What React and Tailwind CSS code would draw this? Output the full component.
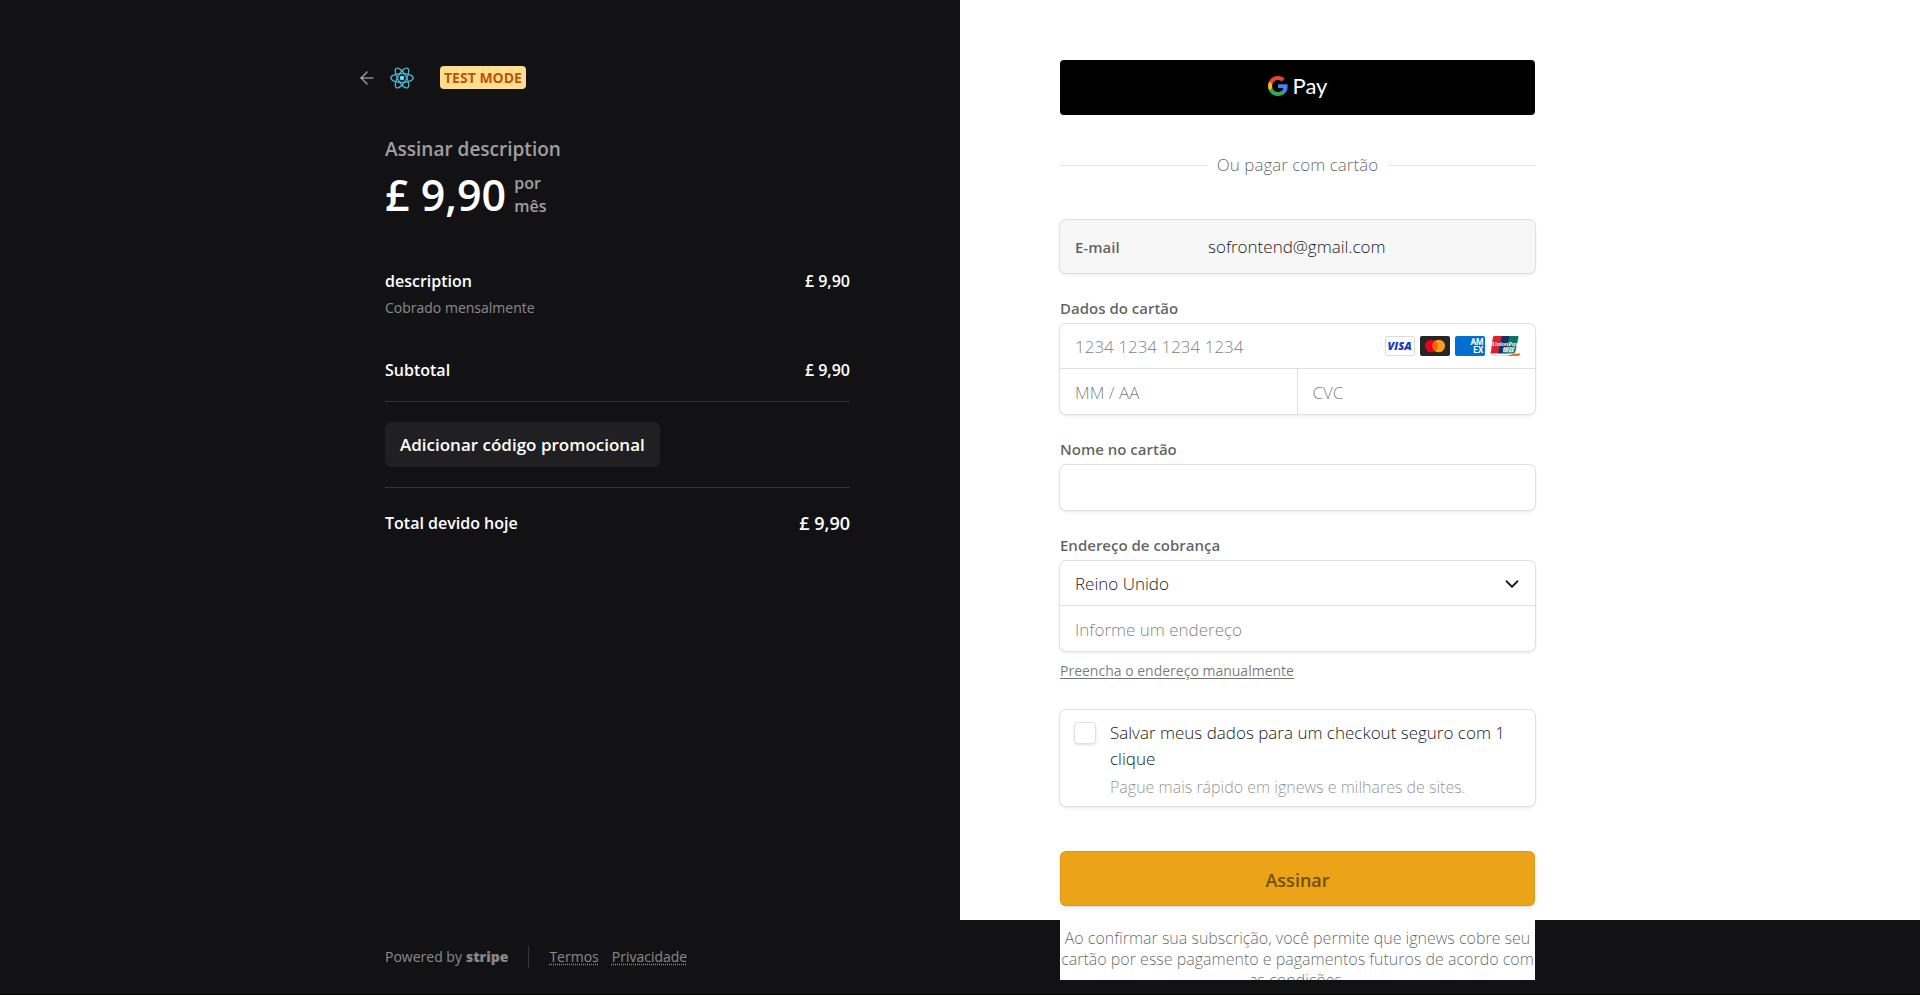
import React from "react";
import { ArrowLeft, ChevronDown } from "lucide-react";

const fieldBox =
  "rounded-md bg-white shadow-[0_0_0_1px_#e0e0e0,0_2px_4px_rgba(0,0,0,0.07),0_1px_2px_rgba(0,0,0,0.05)]";
const labelText = "text-[15px] leading-5 font-semibold text-[#1a1a1a]/70";
const inputText =
  "w-full bg-transparent px-[15px] text-[17px] font-light text-[#1a1a1a] placeholder:text-[#1a1a1a]/60 outline-none";

function ReactLogo() {
  return (
    <svg viewBox="0 0 24 24" className="size-6" fill="none" stroke="#4db3cd" strokeWidth="1.3" aria-hidden="true">
      <circle cx="12" cy="12" r="2.3" fill="#61dafb" stroke="none" />
      <ellipse cx="12" cy="12" rx="11.2" ry="4.3" />
      <ellipse cx="12" cy="12" rx="11.2" ry="4.3" transform="rotate(60 12 12)" />
      <ellipse cx="12" cy="12" rx="11.2" ry="4.3" transform="rotate(120 12 12)" />
    </svg>
  );
}

function GoogleMark() {
  return (
    <svg viewBox="1 1 22 22" className="size-5" aria-hidden="true">
      <path fill="#4285f4" d="M22.56 12.25c0-.78-.07-1.53-.2-2.25H12v4.26h5.92c-.26 1.37-1.04 2.53-2.21 3.31v2.77h3.57c2.08-1.92 3.28-4.74 3.28-8.09z" />
      <path fill="#34a853" d="M12 23c2.97 0 5.46-.98 7.28-2.66l-3.57-2.77c-.98.66-2.23 1.06-3.71 1.06-2.86 0-5.29-1.93-6.16-4.53H2.18v2.84C3.99 20.53 7.7 23 12 23z" />
      <path fill="#fbbc05" d="M5.84 14.09c-.22-.66-.35-1.36-.35-2.09s.13-1.43.35-2.09V7.07H2.18C1.43 8.55 1 10.22 1 12s.43 3.45 1.18 4.93l2.85-2.22.81-.62z" />
      <path fill="#ea4335" d="M12 5.38c1.62 0 3.06.56 4.21 1.64l3.15-3.15C17.45 2.09 14.97 1 12 1 7.7 1 3.99 3.47 2.18 7.07l3.66 2.84c.87-2.6 3.3-4.53 6.16-4.53z" />
    </svg>
  );
}

function VisaIcon() {
  return (
    <svg viewBox="0 0 30 20" className="h-5 w-[30px]" role="img" aria-label="Visa">
      <rect x="0.5" y="0.5" width="29" height="19" rx="1.5" fill="#fff" stroke="#dcdcdc" />
      <text x="14.6" y="14" textAnchor="middle" fontFamily="Open Sans, sans-serif" fontWeight="800" fontStyle="italic" fontSize="11" fill="#1434cb">
        VISA
      </text>
    </svg>
  );
}

function MastercardIcon() {
  return (
    <svg viewBox="0 0 30 20" className="h-5 w-[30px]" role="img" aria-label="Mastercard">
      <rect width="30" height="20" rx="2" fill="#252525" />
      <circle cx="11.3" cy="10" r="6.3" fill="#eb001b" />
      <circle cx="18.7" cy="10" r="6.3" fill="#f79e1b" />
      <path d="M15 4.9a6.3 6.3 0 0 1 0 10.2a6.3 6.3 0 0 1 0-10.2z" fill="#ff5f00" />
    </svg>
  );
}

function AmexIcon() {
  return (
    <svg viewBox="0 0 30 20" className="h-5 w-[30px]" role="img" aria-label="American Express">
      <rect width="30" height="20" rx="2" fill="#016fd0" />
      <text fill="#fff" fontFamily="Roboto, sans-serif" fontWeight="700" fontSize="8.5">
        <tspan x="15.4" y="9">AM</tspan>
        <tspan x="18.2" y="16.500">EX</tspan>
      </text>
    </svg>
  );
}

function UnionPayIcon() {
  return (
    <svg viewBox="0 0 30 20" className="h-5 w-[30px]" role="img" aria-label="UnionPay">
      <path d="M2 .5h24v19H2A1.5 1.5 0 0 1 .5 18V2A1.5 1.5 0 0 1 2 .5z" fill="#fff" />
      <path d="M.5 16v2A1.5 1.5 0 0 0 2 19.500h18" fill="none" stroke="#dcdcdc" />
      <path d="M4.400 0H12L8.200 17.500H.7L2.900 1.300Q3.200 0 4.400 0z" fill="#d9222a" />
      <path d="M11.700 0H20l-3.700 17.500H7.900z" fill="#16315e" />
      <path d="M19.300 0h8.200q1.300 0 1 1.300L25.300 16q-.4 1.500-1.800 1.500h-8z" fill="#0b7465" />
      <path d="M30 17.200v.8a2 2 0 0 1-2 2H16.500q6-2.800 13.500-2.800z" fill="#f47216" />
      <text fill="#fff" fontWeight="700" fontStyle="italic">
        <tspan x="2" y="9.500" fontSize="6.200" fontFamily="Liberation Serif, serif">UnionPay</tspan>
        <tspan x="12" y="15.800" fontSize="6" fontFamily="Noto Sans CJK SC, sans-serif">银联</tspan>
      </text>
    </svg>
  );
}

function Line({ name, amount, className = "", amountClass = "" }) {
  return (
    <div className={`flex items-center justify-between text-base leading-6 font-semibold text-white ${className}`}>
      <span>{name}</span>
      <span className={amountClass}>{amount}</span>
    </div>
  );
}

function Summary() {
  return (
    <section className="flex flex-col items-end pt-[66px] pr-[110px] pb-[26px]">
      <div className="flex w-full max-w-[465px] flex-1 flex-col">
        <header className="-ml-7 flex h-[23px] items-center">
          <a href="#voltar" aria-label="Voltar" className="text-white/50">
            <ArrowLeft className="size-5" strokeWidth={2} />
          </a>
          <span className="ml-[13px]">
            <ReactLogo />
          </span>
          <span className="ml-[26px] rounded bg-[#ffde92] px-1 text-sm leading-[23px] font-bold text-[#bb5504]">
            TEST MODE
          </span>
        </header>

        <h1 className="mt-12 text-[19px] leading-6 font-semibold text-white/60">Assinar description</h1>
        <div className="mt-1 flex items-center gap-2">
          <span className="text-[43px] leading-[60px] font-semibold text-white">£ 9,90</span>
          <span className="w-10 text-base leading-[23px] font-semibold text-white/60">por mês</span>
        </div>

        <Line name="description" amount="£ 9,90" className="mt-11" />
        <p className="mt-[5px] text-sm leading-5 text-white/50">Cobrado mensalmente</p>
        <Line name="Subtotal" amount="£ 9,90" className="mt-10 border-b border-white/15 pb-[19px]" />
        <div className="border-b border-white/15 py-5">
          <button type="button" className="h-[45px] rounded-md bg-[#202022] px-[15px] text-[17px] font-semibold text-white">
            Adicionar código promocional
          </button>
        </div>
        <Line name="Total devido hoje" amount="£ 9,90" className="mt-[23px]" amountClass="text-lg leading-6" />

        <footer className="mt-auto flex items-center text-sm leading-[22px] text-white/50">
          <span>Powered by</span>
          <span className="ml-1 font-extrabold">stripe</span>
          <span className="mx-5 h-[22px] w-px bg-white/15" />
          <a href="#termos" className="underline decoration-dotted underline-offset-2">Termos</a>
          <a href="#privacidade" className="ml-[13px] underline decoration-dotted underline-offset-2">Privacidade</a>
        </footer>
      </div>
    </section>
  );
}

function PaymentForm() {
  return (
    <form className="bg-white pt-[60px] pb-3.5 pl-[100px]">
      <div className="w-full max-w-[475px]">
        <button type="button" aria-label="Google Pay" className="flex h-[55px] w-full items-center justify-center gap-[5px] rounded bg-black pb-1">
          <GoogleMark />
          <span className="font-['Lato',sans-serif] text-[22px] leading-6 text-white">Pay</span>
        </button>

        <div className="mt-[38px] flex items-center gap-2.5 text-[17px] leading-6 font-light text-[#1a1a1a]/70">
          <span className="h-px flex-1 bg-[#e6e6e6]" />
          Ou pagar com cartão
          <span className="h-px flex-1 bg-[#e6e6e6]" />
        </div>

        <div className="mt-[43px] flex h-[53px] items-center rounded-md bg-[#f7f7f7] shadow-[0_0_0_1px_#e0e0e0,0_2px_4px_rgba(0,0,0,0.07),0_1px_2px_rgba(0,0,0,0.05)]">
          <label htmlFor="email" className={`w-[133px] shrink-0 pl-[15px] ${labelText}`}>E-mail</label>
          <input id="email" type="email" readOnly defaultValue="sofrontend@gmail.com" className={inputText} />
        </div>

        <fieldset className="mt-[25px]">
          <legend className={labelText}>Dados do cartão</legend>
          <div className={`mt-1.5 ${fieldBox}`}>
            <div className="flex h-[45px] items-center border-b border-[#e0e0e0] pr-[15px]">
              <input aria-label="Número do cartão" placeholder="1234 1234 1234 1234" className={`pt-0.5 ${inputText}`} />
              <div className="flex shrink-0 gap-[5px]">
                <VisaIcon />
                <MastercardIcon />
                <AmexIcon />
                <UnionPayIcon />
              </div>
            </div>
            <div className="grid h-[45px] grid-cols-2 divide-x divide-[#e0e0e0]">
              <input aria-label="Validade" placeholder="MM / AA" className={`pt-0.5 ${inputText}`} />
              <input aria-label="Código de segurança" placeholder="CVC" className={`pt-0.5 ${inputText}`} />
            </div>
          </div>
        </fieldset>

        <div className="mt-[25px]">
          <label htmlFor="nome" className={`block ${labelText}`}>Nome no cartão</label>
          <input id="nome" className={`mt-1.5 block h-[45px] w-full px-[15px] text-[17px] font-light outline-none ${fieldBox}`} />
        </div>

        <fieldset className="mt-[25px]">
          <legend className={labelText}>Endereço de cobrança</legend>
          <div className={`mt-1.5 ${fieldBox}`}>
            <div className="relative border-b border-[#e0e0e0]">
              <select aria-label="País" className={`h-11 appearance-none pt-0.5 ${inputText}`}>
                <option>Reino Unido</option>
              </select>
              <ChevronDown className="pointer-events-none absolute top-3 right-3 size-[22px] text-[#1a1a1a]" />
            </div>
            <input aria-label="Endereço" placeholder="Informe um endereço" className={`h-[45px] pt-0.5 ${inputText}`} />
          </div>
        </fieldset>
        <a href="#manual" className="mt-2.5 block text-sm leading-5 text-[#1a1a1a]/60 underline underline-offset-2">
          Preencha o endereço manualmente
        </a>

        <div className={`mt-[29px] flex gap-3.5 px-3.5 pt-2.5 pb-[9px] ${fieldBox}`}>
          <input
            id="salvar"
            type="checkbox"
            className="mt-0.5 size-[22px] shrink-0 appearance-none rounded border border-[#e0e0e0] bg-white shadow-sm"
          />
          <div>
            <label htmlFor="salvar" className="block text-[17px] leading-[26px] font-light text-[#1a1a1a]">
              Salvar meus dados para um checkout seguro com 1 clique
            </label>
            <p className="mt-[5px] text-base leading-5 font-light text-[#1a1a1a]/50">
              Pague mais rápido em ignews e milhares de sites.
            </p>
          </div>
        </div>

        <button
          type="submit"
          className="mt-[45px] h-[55px] w-full rounded-md bg-[#eba417] pt-0.5 text-lg font-semibold text-[#714f0b] shadow-[inset_0_0_0_1px_rgba(50,50,93,0.1),0_2px_5px_rgba(50,50,93,0.1),0_1px_1px_rgba(0,0,0,0.07)]"
        >
          Assinar
        </button>
      </div>
    </form>
  );
}

export default function App() {
  return (
    <main className="grid min-h-screen grid-cols-2 border-b border-black bg-[#121214] font-['Open_Sans','Noto_Sans',sans-serif]">
      <Summary />
      <div>
        <PaymentForm />
        <p className="ml-[100px] h-[60px] max-w-[475px] overflow-hidden bg-white pt-2 text-center text-base leading-[21px] font-light text-[#1a1a1a]/70">
          Ao confirmar sua subscrição, você permite que ignews cobre seu cartão por esse pagamento e pagamentos futuros de
          acordo com as condições.
        </p>
      </div>
    </main>
  );
}
